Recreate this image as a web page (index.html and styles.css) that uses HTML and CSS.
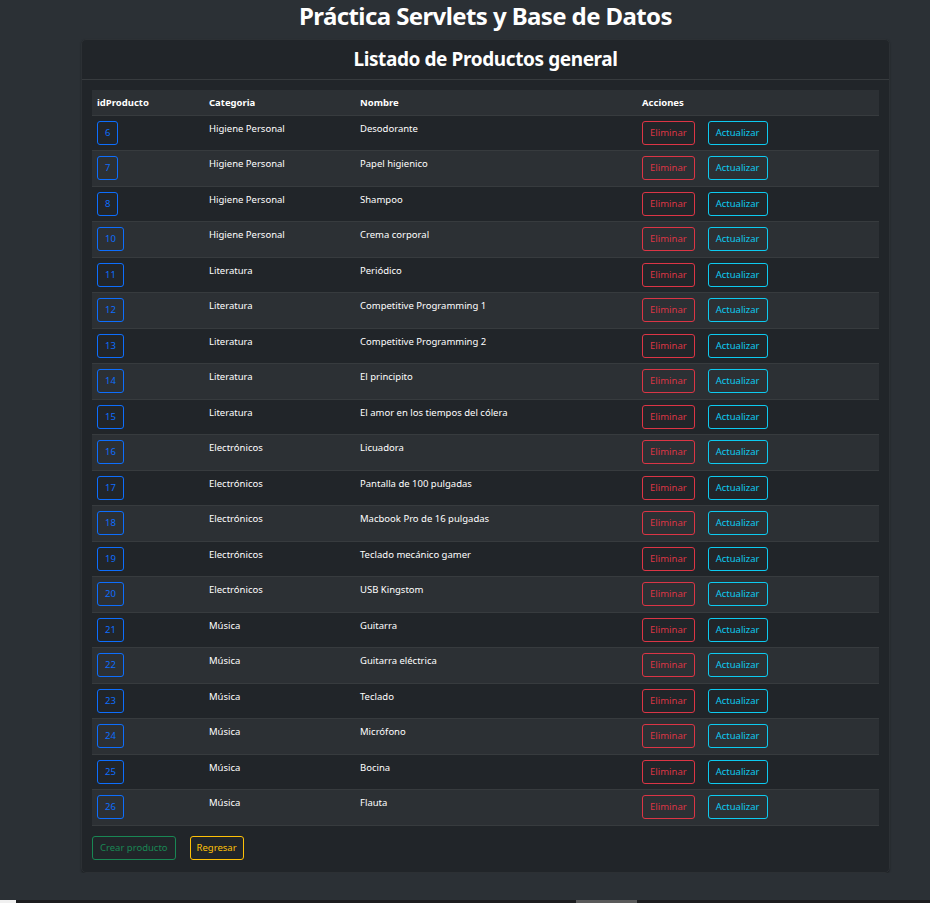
FILE: index.html
```html
<!DOCTYPE html>
<html lang="es">
<head>
<meta charset="utf-8">
<title>Práctica Servlets y Base de Datos</title>
<link rel="stylesheet" href="styles.css">
</head>
<body>
<div class="page">
  <h1 class="title">Práctica Servlets y Base de Datos</h1>
  <div class="card">
    <div class="card-header">Listado de Productos general</div>
    <div class="card-body">
      <table class="table">
        <colgroup>
          <col class="c1"><col class="c2"><col class="c3"><col class="c4">
        </colgroup>
        <thead>
          <tr><th>idProducto</th><th>Categoria</th><th>Nombre</th><th>Acciones</th></tr>
        </thead>
        <tbody>
          <tr><td><a class="btn btn-primary">6</a></td><td>Higiene Personal</td><td>Desodorante</td><td><a class="btn btn-danger">Eliminar</a><a class="btn btn-info">Actualizar</a></td></tr>
          <tr><td><a class="btn btn-primary">7</a></td><td>Higiene Personal</td><td>Papel higienico</td><td><a class="btn btn-danger">Eliminar</a><a class="btn btn-info">Actualizar</a></td></tr>
          <tr><td><a class="btn btn-primary">8</a></td><td>Higiene Personal</td><td>Shampoo</td><td><a class="btn btn-danger">Eliminar</a><a class="btn btn-info">Actualizar</a></td></tr>
          <tr><td><a class="btn btn-primary">10</a></td><td>Higiene Personal</td><td>Crema corporal</td><td><a class="btn btn-danger">Eliminar</a><a class="btn btn-info">Actualizar</a></td></tr>
          <tr><td><a class="btn btn-primary">11</a></td><td>Literatura</td><td>Periódico</td><td><a class="btn btn-danger">Eliminar</a><a class="btn btn-info">Actualizar</a></td></tr>
          <tr><td><a class="btn btn-primary">12</a></td><td>Literatura</td><td>Competitive Programming 1</td><td><a class="btn btn-danger">Eliminar</a><a class="btn btn-info">Actualizar</a></td></tr>
          <tr><td><a class="btn btn-primary">13</a></td><td>Literatura</td><td>Competitive Programming 2</td><td><a class="btn btn-danger">Eliminar</a><a class="btn btn-info">Actualizar</a></td></tr>
          <tr><td><a class="btn btn-primary">14</a></td><td>Literatura</td><td>El principito</td><td><a class="btn btn-danger">Eliminar</a><a class="btn btn-info">Actualizar</a></td></tr>
          <tr><td><a class="btn btn-primary">15</a></td><td>Literatura</td><td>El amor en los tiempos del cólera</td><td><a class="btn btn-danger">Eliminar</a><a class="btn btn-info">Actualizar</a></td></tr>
          <tr><td><a class="btn btn-primary">16</a></td><td>Electrónicos</td><td>Licuadora</td><td><a class="btn btn-danger">Eliminar</a><a class="btn btn-info">Actualizar</a></td></tr>
          <tr><td><a class="btn btn-primary">17</a></td><td>Electrónicos</td><td>Pantalla de 100 pulgadas</td><td><a class="btn btn-danger">Eliminar</a><a class="btn btn-info">Actualizar</a></td></tr>
          <tr><td><a class="btn btn-primary">18</a></td><td>Electrónicos</td><td>Macbook Pro de 16 pulgadas</td><td><a class="btn btn-danger">Eliminar</a><a class="btn btn-info">Actualizar</a></td></tr>
          <tr><td><a class="btn btn-primary">19</a></td><td>Electrónicos</td><td>Teclado mecánico gamer</td><td><a class="btn btn-danger">Eliminar</a><a class="btn btn-info">Actualizar</a></td></tr>
          <tr><td><a class="btn btn-primary">20</a></td><td>Electrónicos</td><td>USB Kingstom</td><td><a class="btn btn-danger">Eliminar</a><a class="btn btn-info">Actualizar</a></td></tr>
          <tr><td><a class="btn btn-primary">21</a></td><td>Música</td><td>Guitarra</td><td><a class="btn btn-danger">Eliminar</a><a class="btn btn-info">Actualizar</a></td></tr>
          <tr><td><a class="btn btn-primary">22</a></td><td>Música</td><td>Guitarra eléctrica</td><td><a class="btn btn-danger">Eliminar</a><a class="btn btn-info">Actualizar</a></td></tr>
          <tr><td><a class="btn btn-primary">23</a></td><td>Música</td><td>Teclado</td><td><a class="btn btn-danger">Eliminar</a><a class="btn btn-info">Actualizar</a></td></tr>
          <tr><td><a class="btn btn-primary">24</a></td><td>Música</td><td>Micrófono</td><td><a class="btn btn-danger">Eliminar</a><a class="btn btn-info">Actualizar</a></td></tr>
          <tr><td><a class="btn btn-primary">25</a></td><td>Música</td><td>Bocina</td><td><a class="btn btn-danger">Eliminar</a><a class="btn btn-info">Actualizar</a></td></tr>
          <tr><td><a class="btn btn-primary">26</a></td><td>Música</td><td>Flauta</td><td><a class="btn btn-danger">Eliminar</a><a class="btn btn-info">Actualizar</a></td></tr>
        </tbody>
      </table>
      <div class="actions">
        <a class="btn btn-success">Crear producto</a>
        <a class="btn btn-warning">Regresar</a>
      </div>
    </div>
  </div>
</div>
<div class="hscroll"><span class="corner"></span><span class="thumb"></span></div>
</body>
</html>
```

FILE: styles.css
```css
html, body {
  margin: 0;
  padding: 0;
  background: #2b3035;
  color: #fff;
  font-family: "Noto Sans", "Open Sans", sans-serif;
}
.page {
  padding-left: 81px;
  width: 809px;
}
.title {
  margin: 0;
  text-align: center;
  font-size: 24px;
  line-height: 32px;
  font-weight: 700;
  letter-spacing: -0.6px;
}
.card {
  margin-top: 7px;
  background: #212529;
  border: 1px solid #2c3034;
  border-radius: 5px;
  box-shadow: 0 1px 2px rgba(0,0,0,0.3);
}
.card-header {
  height: 39px;
  line-height: 38px;
  text-align: center;
  font-size: 19px;
  font-weight: 700;
  letter-spacing: -0.4px;
  border-bottom: 1px solid #373b3e;
}
.card-body {
  padding: 10px 10px 12px;
}
.table {
  width: 100%;
  border-collapse: collapse;
  table-layout: fixed;
  font-size: 9.5px;
}
.c1 { width: 112px; }
.c2 { width: 151px; }
.c3 { width: 282px; }
.table th {
  background: #2c3034;
  text-align: left;
  font-weight: 700;
  height: 25px;
  padding: 0 5px;
  border-bottom: 1px solid #373b3e;
  box-sizing: border-box;
}
.table td {
  vertical-align: top;
  padding: 5px 5px 5.5px;
  line-height: 15px;
  border-bottom: 1px solid #373b3e;
}
.table tbody tr:nth-child(even) td {
  background: #2c3034;
}
.btn {
  display: inline-block;
  box-sizing: border-box;
  height: 24px;
  line-height: 22px;
  padding: 0 7px;
  border: 1px solid;
  border-radius: 3px;
  font-size: 9.5px;
  vertical-align: top;
}
.btn-primary { color: #0d6efd; border-color: #0d6efd; }
.btn-danger { color: #dc3545; border-color: #dc3545; margin-right: 13px; }
.btn-info { color: #0dcaf0; border-color: #0dcaf0; }
.btn-success { color: #198754; border-color: #198754; }
.btn-warning { color: #ffc107; border-color: #ffc107; margin-left: 14px; padding: 0 6px; }
.actions {
  margin-top: 10px;
  display: flex;
}
.hscroll {
  position: fixed;
  left: 0;
  right: 0;
  bottom: 0;
  height: 3px;
  background: #1c1d1f;
}
.corner {
  position: absolute;
  left: 0;
  top: 0;
  width: 16px;
  height: 3px;
  background: #f0f0f0;
}
.thumb {
  position: absolute;
  left: 576px;
  top: 0;
  width: 61px;
  height: 3px;
  background: #5a5a5a;
}
```
